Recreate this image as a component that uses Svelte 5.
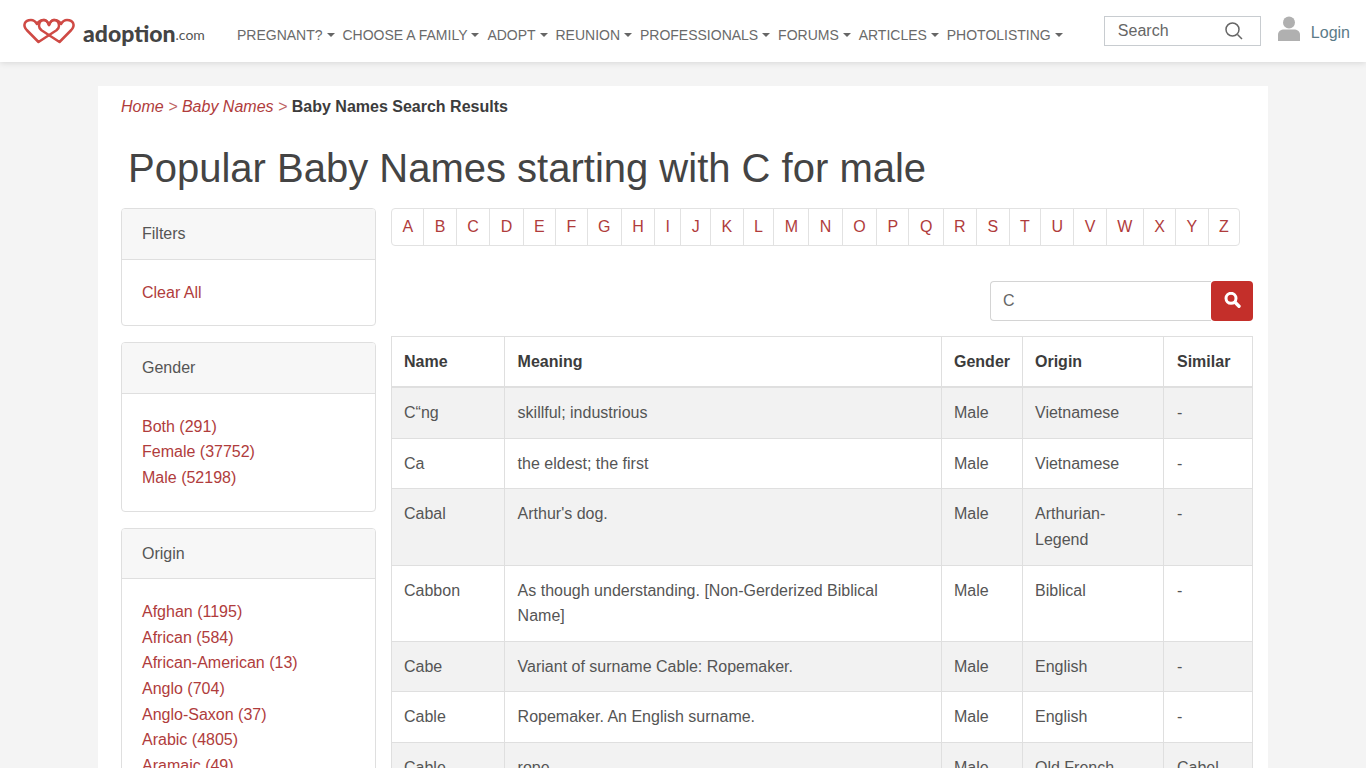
<script>
  const nav = ['PREGNANT?', 'CHOOSE A FAMILY', 'ADOPT', 'REUNION', 'PROFESSIONALS', 'FORUMS', 'ARTICLES', 'PHOTOLISTING'];
  const letters = 'ABCDEFGHIJKLMNOPQRSTUVWXYZ'.split('');
  const genders = ['Both (291)', 'Female (37752)', 'Male (52198)'];
  const origins = ['Afghan (1195)', 'African (584)', 'African-American (13)', 'Anglo (704)', 'Anglo-Saxon (37)', 'Arabic (4805)', 'Aramaic (49)'];
  const rows = [
    ['C“ng', 'skillful; industrious', 'Male', 'Vietnamese', '-'],
    ['Ca', 'the eldest; the first', 'Male', 'Vietnamese', '-'],
    ['Cabal', "Arthur's dog.", 'Male', 'Arthurian-Legend', '-'],
    ['Cabbon', 'As though understanding. [Non-Gerderized Biblical Name]', 'Male', 'Biblical', '-'],
    ['Cabe', 'Variant of surname Cable: Ropemaker.', 'Male', 'English', '-'],
    ['Cable', 'Ropemaker. An English surname.', 'Male', 'English', '-'],
    ['Cable', 'rope', 'Male', 'Old French', 'Cabel']
  ];
</script>

<div class="viewport">
  <header class="navbar">
    <a class="logo" href="#home">
      <svg width="54" height="26" viewBox="0 0 53 26" fill="none" stroke="#cf4a45" stroke-width="2.5" stroke-linejoin="round">
        <path d="M16 24 L4.2 12 C0 7.5 2 2 8.5 2 C10.5 2 13 3.5 14.5 6 C16 3.5 18.5 2 21 2 C23.5 2 25.5 4.5 26.5 7 C27.5 4.5 29 2 31.5 2 C34.5 2 36.5 4.5 36.5 8 C36.5 10 35.5 11 34 12.3 L16 24 Z"/>
        <path transform="matrix(-1 0 0 1 53 0)" d="M16 24 L4.2 12 C0 7.5 2 2 8.5 2 C10.5 2 13 3.5 14.5 6 C16 3.5 18.5 2 21 2 C23.5 2 25.5 4.5 26.5 7 C27.5 4.5 29 2 31.5 2 C34.5 2 36.5 4.5 36.5 8 C36.5 10 35.5 11 34 12.3 L16 24 Z"/>
      </svg>
      <span class="word">adoption</span><span class="dotcom">.com</span>
    </a>
    <nav class="menu">
      {#each nav as label}
        <a href="#nav">{label}<i class="caret"></i></a>
      {/each}
    </nav>
    <div class="nav-search">
      <span>Search</span>
      <svg width="20" height="20" viewBox="0 0 20 20" fill="none" stroke="#666" stroke-width="1.5"><circle cx="8.5" cy="8.5" r="6.5"/><path d="M13.5 13.5 L18 18"/></svg>
    </div>
    <div class="login">
      <svg width="22" height="25" viewBox="0 0 22 25" fill="#b0b0b0"><circle cx="11" cy="6.5" r="6"/><path d="M0 25 V19 C0 15 3 13.5 6 13.5 H16 C19 13.5 22 15 22 19 V25 Z"/></svg>
      <a href="#login">Login</a>
    </div>
  </header>

  <main class="container">
    <div class="breadcrumb">
      <a href="#home">Home</a> <em>&gt;</em> <a href="#names">Baby Names</a> <em>&gt;</em> <b>Baby Names Search Results</b>
    </div>
    <h1>Popular Baby Names starting with C for male</h1>
    <div class="columns">
      <aside class="sidebar">
        <section class="card">
          <h2>Filters</h2>
          <div class="card-body"><a href="#clear">Clear All</a></div>
        </section>
        <section class="card">
          <h2>Gender</h2>
          <div class="card-body">
            {#each genders as g}<a href="#g">{g}</a>{/each}
          </div>
        </section>
        <section class="card">
          <h2>Origin</h2>
          <div class="card-body">
            {#each origins as o}<a href="#o">{o}</a>{/each}
          </div>
        </section>
      </aside>
      <div class="content">
        <ul class="pagination">
          {#each letters as l}<li><a href="#l">{l}</a></li>{/each}
        </ul>
        <form class="search">
          <input type="text" value="C" />
          <button type="button" aria-label="Search">
            <svg width="17" height="17" viewBox="0 0 17 17" fill="none" stroke="#fff"><circle cx="7" cy="6.3" r="5" stroke-width="3"/><path d="M11 10.3 L15 14.3" stroke-width="3.4" stroke-linecap="round"/></svg>
          </button>
        </form>
        <table>
          <colgroup>
            <col class="c1" /><col class="c2" /><col class="c3" /><col class="c4" /><col class="c5" />
          </colgroup>
          <thead>
            <tr><th>Name</th><th>Meaning</th><th>Gender</th><th>Origin</th><th>Similar</th></tr>
          </thead>
          <tbody>
            {#each rows as r}
              <tr>{#each r as c}<td>{c}</td>{/each}</tr>
            {/each}
          </tbody>
        </table>
      </div>
    </div>
  </main>
</div>

<style>
  :global(body) { margin: 0; background: #f4f4f4; }
  .viewport {
    height: 768px; overflow: hidden;
    font: 16px/25.6px "Liberation Sans", Arial, sans-serif;
    color: #555;
  }
  a { color: #b03c3c; text-decoration: none; }
  .navbar {
    height: 62px; background: #fff; box-shadow: 0 1px 6px rgba(0,0,0,.12);
    display: flex; align-items: center; box-sizing: border-box;
    padding: 0 16px 0 22px; position: relative;
  }
  .logo { display: flex; align-items: center; width: 215px; flex: none; padding-top: 3px; box-sizing: border-box; }
  .logo svg { margin-right: 7px; flex: none; margin-top: -3px; }
  .word { font: 900 23px/28px Lato, sans-serif; color: #444; }
  .dotcom { font: 400 14px/28px Lato, sans-serif; color: #555; margin-top: 5px; }
  .menu { display: flex; gap: 7.9px; flex: 1; padding-top: 8px; }
  .menu a { color: #6a6a6a; font-size: 14px; line-height: 20px; white-space: nowrap; }
  .caret {
    display: inline-block; margin-left: 4px; vertical-align: 3px;
    border: 4.5px solid transparent; border-top-color: #666; border-bottom: 0;
  }
  .nav-search {
    width: 157px; height: 30px; border: 1px solid #c8ccd0; box-sizing: border-box;
    display: flex; align-items: center; justify-content: space-between;
    padding: 0 16px 0 13px; color: #666; margin-top: -1px; flex: none;
  }
  .login { display: flex; align-items: center; gap: 11px; margin-left: 17px; flex: none; }
  .login svg { margin-top: -5px; }
  .login a { color: #5b7b88; padding-top: 3px; }
  .container {
    width: 1170px; margin: 24px auto 0; background: #fff;
    box-sizing: border-box; padding: 8px 15px 0 23px;
  }
  .breadcrumb { height: 25px; white-space: pre-wrap; }
  .breadcrumb a, .breadcrumb em { font-style: italic; color: #b03c3c; }
  .breadcrumb em { opacity: .8; }
  .breadcrumb b { color: #3c3c3c; }
  h1 {
    margin: 25px 0 16px 7px; font-size: 40px; line-height: 48px; font-weight: 400; color: #444;
  }
  .columns { display: flex; gap: 15px; }
  .sidebar { width: 255px; flex: none; display: flex; flex-direction: column; gap: 16px; }
  .card { border: 1px solid #dfdfdf; border-radius: 4px; overflow: hidden; }
  .card h2 {
    margin: 0; padding: 12px 20px; font-size: 16px; line-height: 25.6px; font-weight: 400;
    background: #f7f7f7; border-bottom: 1px solid #dfdfdf; color: #555;
  }
  .card-body { padding: 20px; }
  .card-body a { display: block; }
  .content { width: 862px; flex: none; }
  .pagination {
    list-style: none; margin: 0; padding: 0; display: inline-flex;
    border: 1px solid #e2e2e2; border-radius: 4px;
  }
  .pagination li + li { border-left: 1px solid #e2e2e2; }
  .pagination a { display: block; padding: 5px 10.4px; }
  .search { display: flex; justify-content: flex-end; margin: 35px 0 15px; }
  .search input {
    width: 221px; height: 40px; box-sizing: border-box; border: 1px solid #d4d4d4;
    border-radius: 4px 0 0 4px; border-right: 0; padding: 0 12px;
    font: 16px "Liberation Sans", Arial, sans-serif; color: #666;
  }
  .search button {
    width: 42px; height: 40px; border: 0; border-radius: 4px; background: #c42f2a;
    display: flex; align-items: center; justify-content: center; padding: 0;
  }
  table { width: 861px; table-layout: fixed; border-collapse: collapse; }
  .c1 { width: 113px; } .c2 { width: 437px; } .c3 { width: 81px; } .c4 { width: 141px; } .c5 { width: 89px; }
  th, td { border: 1px solid #dfdfdf; padding: 12px; text-align: left; vertical-align: top; }
  th:nth-child(2), td:nth-child(2) { padding-left: 12.6px; padding-right: 15px; }
  th:nth-child(5), td:nth-child(5) { padding-left: 13px; }
  th { border-bottom-width: 2px; color: #3c3c3c; font-weight: 700; }
  tbody tr:nth-child(odd) { background: #f2f2f2; }
</style>
